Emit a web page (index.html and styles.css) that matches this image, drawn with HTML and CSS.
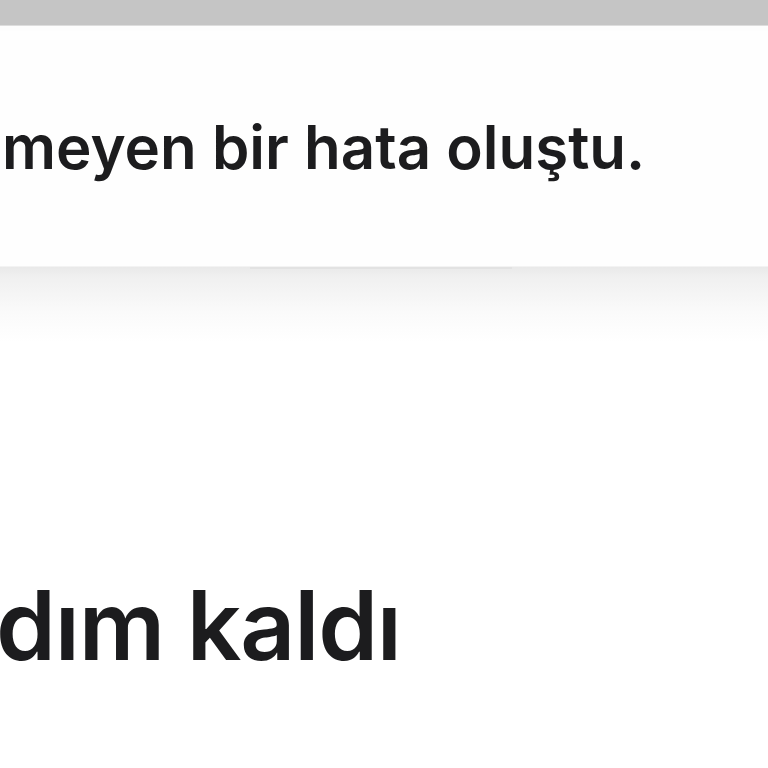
FILE: index.html
```html
<!DOCTYPE html>
<html lang="tr">
<head>
<meta charset="utf-8">
<link rel="stylesheet" href="styles.css">
</head>
<body>
<div class="topbar"></div>
<div class="card">
  <p class="message">meyen bir hata oluştu.</p>
</div>
<div class="lower">
  <div class="divider"></div>
  <h1 class="title">dım kaldı</h1>
</div>
</body>
</html>
```
FILE: styles.css
```css
html, body {
  margin: 0;
  padding: 0;
  background: #ffffff;
  overflow: hidden;
  width: 768px;
  height: 768px;
}
body {
  font-family: Inter, "Noto Sans", "Liberation Sans", sans-serif;
  color: #1c1c1e;
}
.topbar {
  height: 25px;
  background: #c5c5c5;
  border-bottom: 1px solid #dddddd;
}
.card {
  height: 235px;
  background: #fefefe;
  border-top: 5px solid #fdfdfd;
  border-bottom: 1px solid #f3f3f3;
}
.message {
  margin: 0 0 0 2px;
  padding-top: 86px;
  font-size: 60px;
  line-height: 1;
  font-weight: 600;
  letter-spacing: 0;
  white-space: nowrap;
}
.lower {
  position: relative;
  height: 502px;
  background: linear-gradient(#e9e9e9 0px, #f0f0f0 10px, #fafafa 45px, #ffffff 75px);
  display: flex;
  flex-direction: column;
}
.divider {
  position: absolute;
  left: 250px;
  width: 262px;
  top: 0;
  height: 2px;
  background: #e2e2e2;
}
.title {
  margin: 310px 0 0 -4px;
  font-size: 96px;
  font-weight: 600;
  letter-spacing: -1.2px;
  line-height: 1;
  white-space: nowrap;
}
```
